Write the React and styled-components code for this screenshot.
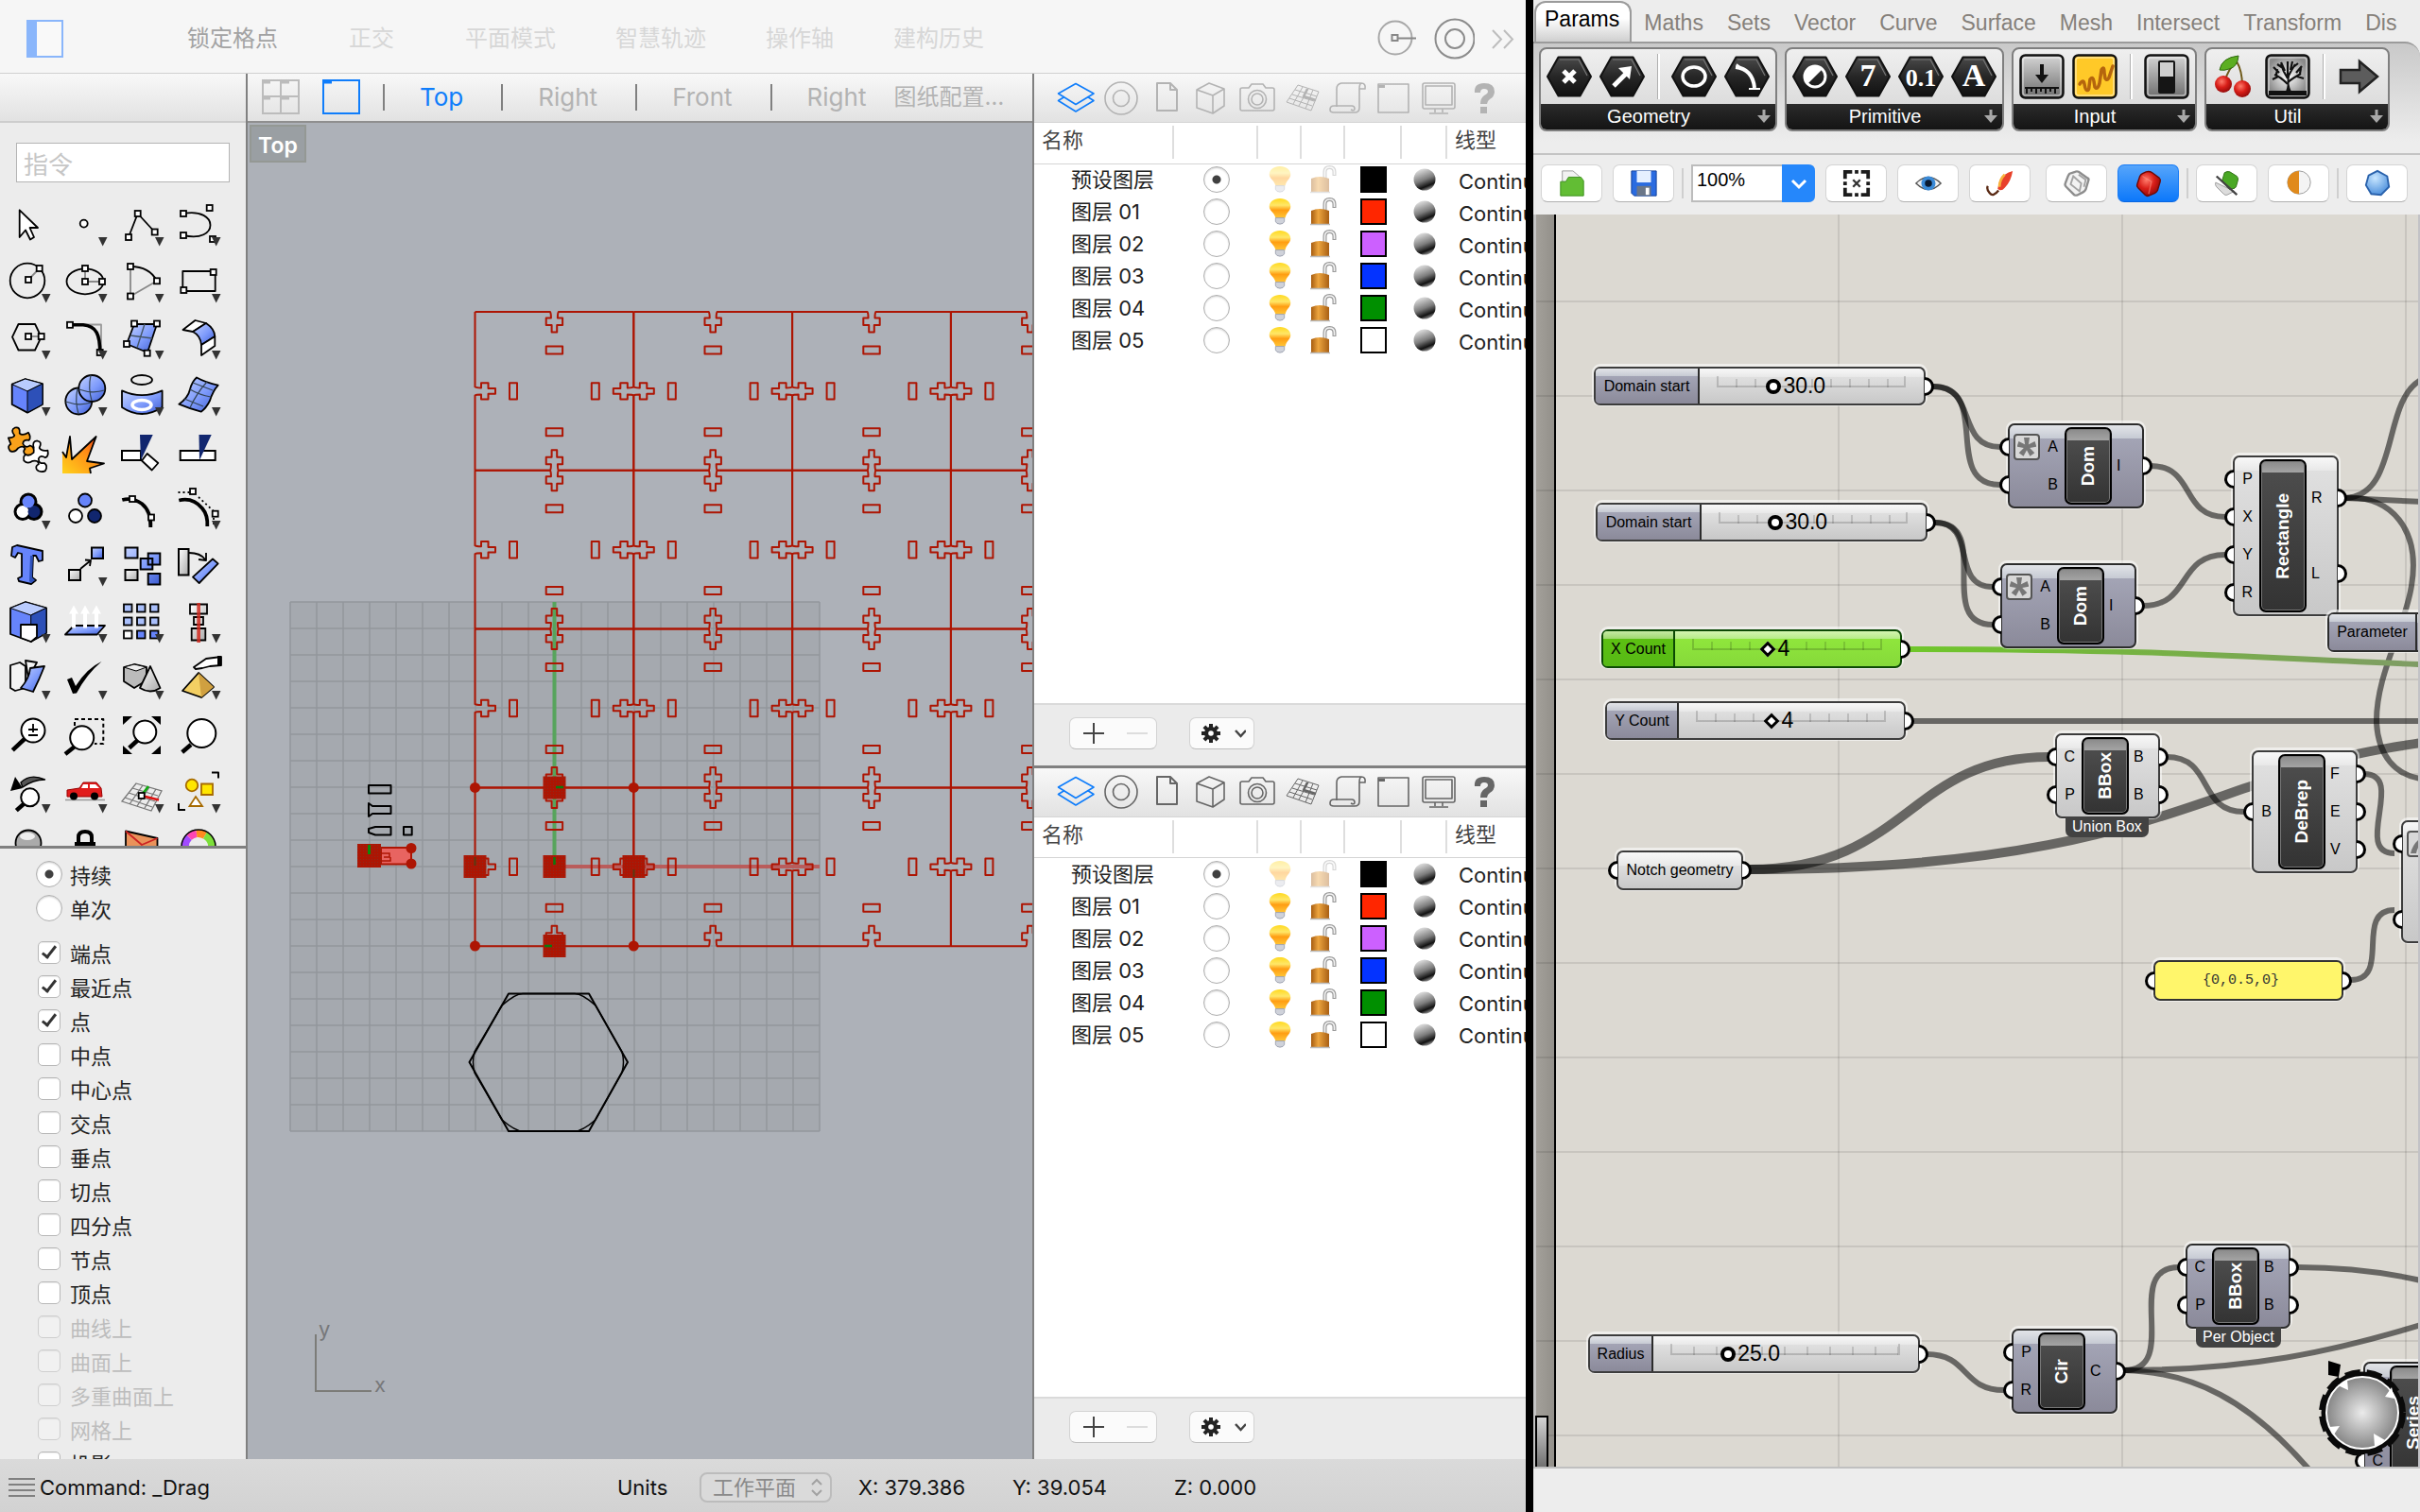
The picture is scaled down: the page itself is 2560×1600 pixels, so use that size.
import React from "react";
import styled, { createGlobalStyle, css } from "styled-components";

const ui = `Inter, "Noto Sans CJK SC", sans-serif`;
const gh = `"Liberation Sans", Arial, sans-serif`;

const GlobalStyle = createGlobalStyle`
  *, *::before, *::after { box-sizing: border-box; }
  html, body, #root { height: 100%; }
  body { margin: 0; overflow: hidden; background: #000; font-family: ${ui}; font-size: 22px; color: #222; }
  button, input, select { font: inherit; color: inherit; margin: 0; }
  button { background: none; border: 0; padding: 0; }
  svg { display: block; }
`;

/* ---------- shell ---------- */

const Desktop = styled.div`
  display: grid;
  grid-template-columns: minmax(0, 1614fr) 8px minmax(0, 938fr);
  height: 100vh;
`;

const Modeler = styled.section`
  display: grid;
  grid-template-rows: 78px minmax(0, 1fr) 56px;
  grid-column: 1;
  min-width: 0;
  background: #ececec;
`;

const TopBar = styled.header`
  display: flex;
  align-items: center;
  padding: 4px 12px 0 28px;
  background: #f6f6f6;
  border-bottom: 1px solid #d0d0d0;
`;

const ModeList = styled.nav`
  display: flex;
  gap: 63px;
  margin-left: 131px;
  flex: 1;
`;

const ModeButton = styled.button`
  min-width: 72px;
  font-size: 24px;
  line-height: 32px;
  white-space: nowrap;
  color: ${(p) => (p.$on ? "#a3a3a3" : "#d7d7d7")};
`;

const IconRow = styled.div`
  display: flex;
  align-items: center;
  gap: 18px;
`;

const Work = styled.div`
  display: grid;
  grid-template-columns: 262px minmax(0, 1fr) 522px;
  min-height: 0;
`;

const barFill = "linear-gradient(#f8f8f8, #e2e2e2)";

/* ---------- sidebar ---------- */

const Sidebar = styled.aside`
  display: flex;
  flex-direction: column;
  min-height: 0;
  border-right: 2px solid #808080;
  background: #ececec;
`;

const SidebarHead = styled.div`
  flex: none;
  height: 52px;
  background: ${barFill};
  border-bottom: 2px solid #cdcdcd;
`;

const CommandInput = styled.input`
  flex: none;
  height: 42px;
  margin: 21px 17px 15px;
  padding: 4px 7px 0;
  border: 1px solid #b4b4b4;
  background: #fff;
  font-size: 26px;
  &::placeholder { color: #c6c6c6; opacity: 1; }
`;

const Toolbox = styled.div`
  flex: 687 1 0;
  min-height: 0;
  overflow: hidden;
  display: grid;
  grid-template-columns: repeat(4, 60px);
  grid-auto-rows: 60px;
  border-bottom: 3px solid #808080;
`;

const ToolButton = styled.button`
  width: 60px;
  height: 60px;
`;

const Snaps = styled.form`
  flex: 637 1 0;
  min-height: 0;
  overflow: hidden;
  padding: 9px 0 0 38px;
`;

const SnapGroup = styled.div`
  & + & { margin-top: 11px; }
`;

const SnapRow = styled.label`
  display: flex;
  align-items: center;
  height: 36px;
  gap: 8px;
  font-size: 22px;
  color: ${(p) => (p.$off ? "#bdbdbd" : "#222")};
`;

const Radio = styled.input`
  appearance: none;
  flex: none;
  width: 28px;
  height: 28px;
  border-radius: 50%;
  border: 1px solid #b0b0b0;
  background: #fff;
  box-shadow: inset 0 1px 2px rgba(0, 0, 0, 0.2);
  &:checked { background: radial-gradient(circle, #404040 0 4px, #fff 5px); }
`;

const Check = styled.input`
  appearance: none;
  flex: none;
  display: grid;
  place-items: center;
  width: 24px;
  height: 24px;
  margin: 0 2px;
  border-radius: 5px;
  border: 1px solid #b8b8b8;
  background: #fff;
  box-shadow: inset 0 1px 1px rgba(0, 0, 0, 0.08);
  &:disabled { background: #f1f1f1; border-color: #cfcfcf; }
  &:checked::before {
    content: "";
    width: 8px;
    height: 16px;
    margin-bottom: 4px;
    border: solid #333;
    border-width: 0 3px 3px 0;
    transform: rotate(38deg);
  }
`;

/* ---------- viewport ---------- */

const ViewArea = styled.main`
  display: grid;
  grid-template-rows: 52px minmax(0, 1fr);
  min-width: 0;
`;

const ViewTabs = styled.nav`
  display: flex;
  align-items: center;
  gap: 24px;
  padding-left: 15px;
  background: ${barFill};
  border-bottom: 2px solid #8f8f8f;
  overflow: hidden;
`;

const ViewTabList = styled.div`
  display: flex;
  align-items: center;
`;

const ViewTab = styled.button`
  padding: 0 40px 0 37px;
  height: 28px;
  line-height: 28px;
  border-left: ${(p) => (p.$bare ? "0" : "2px solid #808080")};
  ${(p) => p.$bare && css`padding: 0 0 0 28px; margin-left: -39px;`}
  font-size: ${(p) => (p.$bare ? 24 : 26)}px;
  white-space: nowrap;
  color: ${(p) => (p.$on ? "#0f7dfb" : "#b3b3b3")};
`;

const Canvas3D = styled.div`
  position: relative;
  overflow: hidden;
  background: #adb1b8;
`;

const ViewLabel = styled.div`
  position: absolute;
  left: 2px;
  top: 2px;
  padding: 0 7px;
  height: 40px;
  line-height: 40px;
  border: 2px solid #949894;
  background: #9a9fa3;
  color: #fff;
  font-weight: 600;
  font-size: 23px;
`;

const Scene = styled.svg`
  width: 100%;
  height: 100%;
`;

/* ---------- layer panels ---------- */

const Panels = styled.aside`
  display: flex;
  flex-direction: column;
  min-width: 0;
  min-height: 0;
  border-left: 2px solid #808080;
`;

const Panel = styled.section`
  flex: 1 1 0;
  min-height: 0;
  display: flex;
  flex-direction: column;
  background: #fff;
  & + & { border-top: 3px solid #808080; }
`;

const PanelBar = styled.div`
  flex: none;
  height: 52px;
  display: flex;
  align-items: center;
  padding-left: 20px;
  background: ${barFill};
  border-bottom: 1px solid #d4d4d4;
`;

const PanelTab = styled.button`
  width: 48px;
  height: 48px;
  color: ${(p) => (p.$on ? "#0f7dfb" : p.$dim ? "#b3b3b3" : "#666")};
`;

const TableBox = styled.div`
  flex: 1;
  overflow: hidden;
`;

const LayerTable = styled.table`
  width: 100%;
  table-layout: fixed;
  border-collapse: collapse;
`;

const HeadCell = styled.th`
  width: ${(p) => (p.$w ? `${p.$w}px` : "auto")};
  height: 43px;
  padding: 0 0 6px 8px;
  text-align: left;
  font-weight: 400;
  font-size: 22px;
  line-height: 30px;
  color: #444;
  border-bottom: 1px solid #d4d4d4;
  background: ${(p) => (p.$w ? "linear-gradient(#dedede, #dedede) right 3px / 2px 35px no-repeat" : "none")};
`;

const Cell = styled.td`
  height: 34px;
  padding: ${(p) => p.$pad || "0"};
  white-space: nowrap;
  overflow: hidden;
  font-size: 22px;
  line-height: 30px;
  text-align: left;
`;

const Mid = styled.div`
  display: flex;
  justify-content: center;
  align-items: center;
  opacity: ${(p) => (p.$faded ? 0.4 : 1)};
`;

const Swatch = styled.button`
  display: block;
  width: 28px;
  height: 28px;
  border: 2px solid #000;
  background: ${(p) => p.$color};
`;

const PanelFoot = styled.div`
  flex: none;
  height: 66px;
  display: flex;
  align-items: center;
  gap: 34px;
  padding: 0 37px 4px;
  background: #ebebeb;
  border-top: 2px solid #dadada;
`;

const Pill = styled.div`
  display: flex;
  height: 34px;
  border: 1px solid #d3d3d3;
  border-bottom-color: #bdbdbd;
  border-radius: 7px;
  background: #fbfbfb;
`;

const PillButton = styled.button`
  display: grid;
  place-items: center;
  width: ${(p) => p.$w}px;
`;

/* ---------- status bar ---------- */

const StatusBar = styled.footer`
  display: flex;
  align-items: center;
  padding: 4px 0 0 9px;
  background: linear-gradient(#dadada, #d2d2d2);
  color: #111;
  font-size: 22px;
  white-space: nowrap;
`;

const StatusText = styled.span`
  width: ${(p) => p.$w}px;
  padding-left: ${(p) => p.$pad || 0}px;
`;

const SelectWrap = styled.span`
  display: grid;
  align-items: center;
  justify-items: end;
  & > * { grid-area: 1 / 1; }
  & > svg { pointer-events: none; }
`;

const PlaneSelect = styled.select`
  appearance: none;
  width: 140px;
  height: 32px;
  padding: 0 12px;
  border: 2px solid #bcbcbc;
  border-radius: 8px;
  background: #dadada;
  color: #8a8a8a;
  font-size: 22px;
  line-height: 26px;
`;

const Divider = styled.div`
  grid-column: 2;
  background: #000;
`;

/* ---------- node editor ---------- */

const Editor = styled.section`
  grid-column: 3;
  display: grid;
  grid-template-rows: 44px 118px 65px minmax(0, 1fr) 46px;
  min-width: 0;
  background: #ededed;
  font-family: ${gh};
`;

const EditorTabs = styled.nav`
  display: flex;
  align-items: flex-end;
  padding-left: 1px;
  overflow: hidden;
  white-space: nowrap;
`;

const EditorTab = styled.button`
  height: 43px;
  padding: 2px 12px 0 13px;
  font-size: 23px;
  line-height: 30px;
  color: #85807a;
  ${(p) => p.$on && css`
    padding: 0 11px 8px 9px;
    border: solid #9b9b9b;
    border-width: 2px 2px 0;
    border-radius: 12px 12px 0 0;
    background: linear-gradient(#ffffff 40%, #cfcfcf);
    color: #000;
  `}
`;

const Ribbon = styled.div`
  display: flex;
  align-items: flex-start;
  gap: 8px;
  padding: 4px 6px;
  border-top: 2px solid #9b9b9b;
  border-radius: 0 16px 0 0;
  background: linear-gradient(#c9c9c9, #ededed 90%);
  overflow: hidden;
`;

const RibbonGroup = styled.div`
  display: flex;
  flex-direction: column;
  height: 89px;
  border: 2px solid #7f7f7f;
  border-radius: 8px;
  overflow: hidden;
  background: linear-gradient(#efefef, #d4d4d4);
`;

const RibbonTools = styled.div`
  display: flex;
  align-items: center;
  gap: 8px;
  flex: 1;
  padding: 0 6px;
`;

const RibbonSep = styled.span`
  width: 12px;
  height: 48px;
  background: linear-gradient(90deg, transparent 5px, #b0b0b0 5px 6px, #fff 6px 8px, transparent 8px);
`;

const RibbonTool = styled.button`
  width: 48px;
  height: 48px;
`;

const RibbonCaption = styled.div`
  display: flex;
  align-items: center;
  justify-content: space-between;
  height: 27px;
  padding: 0 4px 2px 0;
  background: linear-gradient(#2b2b2b, #141414);
  color: #fff;
  font-size: 20px;
  line-height: 24px;
  & > span { flex: 1; text-align: center; }
`;

const FileBar = styled.div`
  display: flex;
  align-items: center;
  gap: 16px;
  padding: 0 0 4px 8px;
  border-top: 2px solid #c4c4c4;
  overflow: hidden;
`;

const FileGroup = styled.div`
  display: flex;
  align-items: center;
  gap: 11px;
`;

const BarSep = styled.span`
  width: 2px;
  height: 32px;
  margin: 0 -8px;
  background: #cfcfcf;
`;

const FileButton = styled.button`
  flex: none;
  display: grid;
  place-items: center;
  width: 65px;
  height: 40px;
  border: 1px solid ${(p) => (p.$on ? "#1a7cf6" : "#d4d4d4")};
  border-bottom-color: ${(p) => (p.$on ? "#0a66e0" : "#b0b0b0")};
  border-radius: 7px;
  background: ${(p) => (p.$on ? "linear-gradient(#56a5fb, #0c78fa)" : "#fff")};
`;

const ZoomSelect = styled.select`
  appearance: none;
  width: 131px;
  height: 40px;
  padding: 0 4px 8px;
  border: 2px solid #bcbcbc;
  border-radius: 0 7px 7px 0;
  background: #fff;
  color: #000;
  font-size: 20px;
`;

const Board = styled.div`
  position: relative;
  overflow: hidden;
  border-bottom: 2px solid #c0c0c0;
  border-right: 2px solid #c2c2c6;
  background:
    linear-gradient(90deg, #c4c4c4 0 3px, #a3a09a 3px, #93908a 22px, #000 22px 24px, transparent 24px) left / 24px 100% no-repeat,
    #dcd9d2;
`;

const BoardArt = styled.svg`
  position: absolute;
  left: 0;
  top: 0;
  pointer-events: none;
`;

/* The board's top-left corner on the drawing plane; nodes are stored in plane units. */
const OX = 1623;
const OY = 227;

const gray = css`
  background: linear-gradient(#f8f8f8, #e8e8e8 ${(p) => p.$gloss}px, #dfdfdf ${(p) => p.$gloss}px, #c8c8c8);
  border-color: #3c3c3c;
`;
const violet = css`
  background: linear-gradient(#e2e4e8, #c6cad3 ${(p) => p.$gloss}px, #a3a4b5 ${(p) => p.$gloss}px, #8b8a9a);
  border-color: #2c2c2c;
`;

const NodeBox = styled.div`
  position: absolute;
  left: ${(p) => p.$x - OX}px;
  top: ${(p) => p.$y - OY}px;
  width: ${(p) => p.$w}px;
  height: ${(p) => p.$h}px;
  display: flex;
  border: 2px solid;
  border-radius: 7px;
  box-shadow: 0 -1px 0 2px rgba(255, 255, 255, 0.55);
  color: #000;
  ${(p) => (p.$violet ? violet : gray)}
`;

const Ports = styled.div`
  width: ${(p) => (p.$w ? `${p.$w}px` : "auto")};
  flex: ${(p) => (p.$w ? "none" : 1)};
  display: flex;
  flex-direction: column;
  justify-content: center;
`;

const Port = styled.div`
  position: relative;
  display: flex;
  align-items: center;
  justify-content: ${(p) => (p.$out ? "flex-start" : "flex-end")};
  gap: 8px;
  height: 40px;
  padding: ${(p) => (p.$out ? "0 0 0 5px" : "0 7px 0 4px")};
  font-size: 16px;
`;

const Grip = styled.span`
  position: absolute;
  top: 50%;
  width: 10px;
  height: 20px;
  margin-top: -10px;
  border: 3px solid #000;
  background: #fff;
  ${(p) => (p.$out
    ? css`right: -11px; border-left: 0; border-radius: 0 10px 10px 0;`
    : css`left: -11px; border-right: 0; border-radius: 10px 0 0 10px;`)}
`;

const StarBox = styled.span`
  display: grid;
  place-items: center;
  width: 28px;
  height: 28px;
  margin-right: auto;
  border: 2px solid #555;
  border-radius: 4px;
  background: #d8d8d8;
`;

const Core = styled.div`
  flex: none;
  width: 50px;
  margin: 2px 0;
  display: grid;
  place-items: center;
  border: 2px solid #000;
  border-radius: 7px;
  background: linear-gradient(#8a8a8a, #a4a4a4 12px, #4c4c4c 12px, #333);
  box-shadow: inset 0 0 0 1px #777;
`;

const CoreText = styled.span`
  writing-mode: vertical-rl;
  transform: rotate(180deg);
  color: #fff;
  font-weight: 700;
  font-size: 19px;
  line-height: 24px;
`;

const Caption = styled.div`
  position: absolute;
  top: 100%;
  left: 9px;
  height: 22px;
  padding: 0 7px;
  border-radius: 0 0 7px 7px;
  background: #424242;
  color: #fff;
  font-size: 16px;
  line-height: 22px;
  white-space: nowrap;
`;

const NodeText = styled.div`
  flex: 1;
  display: grid;
  place-items: center;
  font-size: 16px;
  white-space: nowrap;
`;

const SliderBox = styled(NodeBox)`
  ${(p) => p.$green && css`
    border-color: #0c4a04;
    background: linear-gradient(#d4f5b0, #b6ec88 8px, #8fe63c 8px, #86d93a);
  `}
`;

const SliderName = styled.label`
  flex: none;
  display: grid;
  place-items: center;
  width: ${(p) => p.$w}px;
  border-right: 2px solid #333;
  border-radius: 4px 0 0 4px;
  font-size: 16px;
  white-space: nowrap;
  ${(p) => (p.$green
    ? css`background: linear-gradient(#c6eaa4, #9fd870 8px, #5cc012 8px, #57b916); border-color: #0c4a04;`
    : violet)}
`;

const Track = styled.div`
  position: relative;
  flex: 1;
  display: grid;
  margin: 0 12px 0 11px;
  & > * { grid-area: 1 / 1; }
`;

const Ticks = styled.span`
  height: 12px;
  margin: 8px 7px 0;
  border: solid rgba(0, 0, 0, 0.16);
  border-width: 0 2px 2px;
  background: repeating-linear-gradient(90deg, transparent 0 ${(p) => p.$step - 2}px, rgba(0, 0, 0, 0.14) ${(p) => p.$step - 2}px ${(p) => p.$step}px) 0 3px / 100% 100% no-repeat;
`;

const Range = styled.input`
  appearance: none;
  width: 100%;
  height: 37px;
  background: none;
  &::-webkit-slider-thumb {
    appearance: none;
    width: 16px;
    height: 16px;
    border: 4px solid #000;
    border-radius: 50%;
    background: #fff;
    ${(p) => p.$diamond && css`
      width: 12px;
      height: 12px;
      border-width: 3px;
      border-radius: 0;
      transform: rotate(45deg);
    `}
  }
`;

const Value = styled.output`
  position: absolute;
  top: 4px;
  margin-left: 10px;
  font-size: 23px;
  line-height: 28px;
`;

const Note = styled.div`
  position: absolute;
  left: ${(p) => p.$x - OX}px;
  top: ${(p) => p.$y - OY}px;
  display: grid;
  place-items: center;
  width: ${(p) => p.$w}px;
  height: ${(p) => p.$h}px;
  padding-right: 16px;
  border: 2px solid #333;
  border-radius: 7px;
  background: #fff66b;
  box-shadow: 0 -1px 0 2px rgba(255, 255, 255, 0.55);
  color: #333;
  font-family: "Liberation Mono", monospace;
  font-size: 15px;
`;

/* ---------- tool icons ---------- */

const P = ({ x, y }) => <rect x={x - 3} y={y - 3} width="6" height="6" fill="#fff" stroke="#000" strokeWidth="1.8" />;
const L = ({ d, w = 1.8, c = "#000", f = "none", ...r }) => <path d={d} fill={f} stroke={c} strokeWidth={w} strokeLinejoin="round" {...r} />;
const Lens = ({ x, y, r, d }) => (
  <>
    <L d={d} w="4.5" strokeLinecap="butt" />
    <circle cx={x} cy={y} r={r} fill="#fff" stroke="#000" strokeWidth="2" />
  </>
);
const B = "url(#blue)";
const piece = "M-10-8q5 1 6-1 -3-6 2-7 5 0 3 6 2 3 8 1 2 5-1 7-5-2-6 2 1 5 6 3 4 2 2 7-5 3-8 0-2-3 1-5-1-4-6-2-4 4-8 1-2-5 2-6z";

const tools = [
  ["选取", 0, <L d="M20.7 14.3V43l6.3-7.5 5 10 4-2.5-4.5-10H40z" f="#fff" />],
  ["点", 1, <circle cx="28.7" cy="28.6" r="4" fill="#fff" stroke="#000" strokeWidth="1.8" />],
  ["多重直线", 1, <><L d="M16 43 25.7 18l18 19.5" /><P x={16} y={43} /><P x={25.7} y={18} /><P x={43.7} y={37.5} /></>],
  ["控制点曲线", 1, <><L d="M14 18C52 11 52 50 14 41" /><P x={14} y={18} /><P x={14} y={41} /><P x={41.7} y={12} /><P x={45} y={45} /></>],
  ["圆", 1, <><circle cx="29" cy="29" r="18.3" fill="none" stroke="#000" strokeWidth="1.8" /><L d="M30 28 41.7 16" c="#888" /><P x={30} y={28} /><P x={41.7} y={16} /></>],
  ["椭圆", 1, <><ellipse cx="30" cy="29.8" rx="19.5" ry="13.5" fill="none" stroke="#000" strokeWidth="1.8" /><L d="M30 16v14h18" c="#888" /><P x={30} y={16} /><P x={30} y={30} /><P x={48} y={30} /></>],
  ["圆弧", 1, <><L d="M46 29.3 18 45.5V14" c="#888" /><L d="M18 14Q38 14 46 29.3" /><P x={18} y={14} /><P x={18} y={45.5} /><P x={46} y={29.3} /></>],
  ["矩形", 1, <><L d="M13.3 19h34.4v21H13.3z" /><P x={45.7} y={20} /><P x={14.3} y={39} /></>],
  ["多边形", 1, <><L d="M13 28.6 19.5 15h17.6L43.6 28.6 37 42.5H19.5z" /><L d="M30 28h13" c="#888" /><P x={30} y={28} /><P x={43.7} y={28} /></>],
  ["圆角", 1, <><L d="M14 15.5H47V46" c="#999" /><L d="M14 15.8h14C42 17 46 26 45.7 46" w="3.6" /><P x={14} y={15.8} /><P x={45.7} y={45} /></>],
  ["曲面", 1, <><L d="M22 15H46L36 45 14 36z" f={B} /><L d="M18 27 41 30M33 15 25 40" w="1.4" c="#456" /><P x={22} y={14.5} /><P x={46} y={14.5} /><P x={14} y={36} /><P x={35.7} y={45.7} /></>],
  ["放样", 1, <><L d="M26.5 11 38 14 24 23 13.5 21z" f="#fff" /><L d="M38 14Q47 20 47.3 28L33 37Q32 27 24 23z" f={B} /><L d="M33 37 47.3 28V38L33 48z" f="#fff" /></>],
  ["立方体", 1, <><L d="M12.7 18.7 26.7 13 45 18v22L29 48.6 12.7 40z" f="#6684fb" /><L d="M12.7 18.7 26.7 13 45 18 29 26z" f="#b9cbfd" w="1" /><L d="M29 26 45 18v22L29 48.6z" f="#2d50b8" w="1" /></>],
  ["布尔运算", 1, <><circle cx="23.3" cy="36.5" r="14" fill={B} stroke="#000" strokeWidth="1.8" /><L d="M9.500 37q14 5 27 1M22 23q-3 14 1 27" w="1.200" c="#345" /><circle cx="37.3" cy="23" r="14" fill={B} stroke="#000" strokeWidth="1.8" /><L d="M23.500 24q14 5 27 1M36 9q-3 14 1 27" w="1.200" c="#345" /></>],
  ["投影曲线", 1, <><ellipse cx="30" cy="14" rx="11" ry="5" fill="none" stroke="#000" strokeWidth="1.8" /><L d="M9 25.4Q30 35 51.6 25.4V43Q30 57 9 43z" f={B} /><ellipse cx="30" cy="40.5" rx="10" ry="5" fill="none" stroke="#fff" strokeWidth="3.5" /></>],
  ["网格", 1, <><L d="M28 11.5Q38 17 50.7 19.6 45 26 42 36 38 44 32.7 47.7 22 45 9.3 39.7 19 33 21 24 23 16 28 11.5z" f={B} /><L d="M39 16Q28 28 21 43.5M21 24q10 6 22 8M15 34l20 8M24 17l21 8" w="1.2" c="#345" /></>],
  ["组合", 0, <><g transform="translate(38.500 37) scale(1.150) rotate(10)"><L d={piece} f="#fff" w="1.500" /></g><g transform="translate(22 22) scale(1.150) rotate(-12)"><L d={piece} f="#f9a11b" w="1.500" /></g></>],
  ["炸开", 0, <><path d="M6 30 10 36 14 14 16 38 41.7 14 32 40l18 2.5-15 5 1 5.5H6z" fill="url(#flame)" /><L d="M6 30 10 36 14 14 16 38 41.7 14 32 40l18 2.5-15 5 1 5.5" /></>],
  ["修剪", 0, <><path d="M9 29h20v10H9z" fill="#fff" stroke="#000" strokeWidth="2" /><L d="M35.7 32 47.3 42 40.7 49.5 30 39.5z" f="#fff" /><path d="M28 12h13.7L29 39z" fill="#11266f" /></>],
  ["分割", 0, <><path d="M10.7 29h37v10h-37z" fill="#fff" stroke="#000" strokeWidth="2" /><path d="M30.5 12H43.7L31 39z" fill="#11266f" /></>],
  ["群组", 1, <><g stroke="#000" strokeWidth="6"><circle cx="30" cy="23" r="6.5" /><circle cx="24" cy="33.5" r="6.5" /><circle cx="36" cy="33.5" r="6.5" /></g><circle cx="24" cy="33.5" r="6.5" fill="#fff" /><circle cx="36" cy="33.5" r="6.5" fill="#11266f" /><circle cx="30" cy="23" r="6.5" fill="#6684fb" /></>],
  ["解散群组", 0, <g stroke="#000" strokeWidth="1.8"><circle cx="30" cy="21.5" r="7" fill="#6684fb" /><circle cx="20" cy="38" r="7" fill="#fff" /><circle cx="40" cy="38" r="7" fill="#11266f" /></g>],
  ["编辑点", 0, <><L d="M9.3 21Q20 18 30 25 40 33 39.3 50" w="3.8" /><P x={20} y={20} /><P x={40} y={39.5} /></>],
  ["控制点", 1, <><L d="M9.3 21.5Q24 18 34 30 40 37 39.3 49" w="3.8" /><L d="M8.5 13H22M30 18 46 33M46 40v8" strokeDasharray="2 3" /><P x={24} y={12} /><P x={47.7} y={35.7} /></>],
  ["文字", 0, <><L d="M12 20 13 11 18 9 45 15 45 25 41 26 38 20 35 20 34 43 38 46 33 50 20 47 19 44 23 42 23 18 19 17 16 22z" f="#6684fb" /><path d="M35 20 34 43l3 3-4 3-2-2 1-27z" fill="#2d50b8" /></>],
  ["移动", 1, <><path d="M13 35h12v11H13z" fill="url(#ash)" stroke="#000" strokeWidth="2" /><path d="M37 11.5h12V23H37z" fill={B} stroke="#000" strokeWidth="2" /><L d="M25 34 36 25M30 24.5l6 .5-1 6" /></>],
  ["复制", 0, <g stroke="#000" strokeWidth="2" fill={B}><path d="M12.5 11.5h13v11h-13zM36.7 17.5h12.6v12H36.700zM28.700 23h12.6v11.5H28.700zM36.700 39h12.6v11.5H36.700z" /><path d="M12.5 35h13v11h-13z" fill="url(#ash)" /></g>],
  ["旋转", 0, <><path d="M9 13h10.5v27.5H9z" fill="url(#ash)" stroke="#000" strokeWidth="2" /><L d="M45 23.5 50.7 28.4 30.7 49 24 42.700z" f={B} /><L d="M20 17q12 0 17 7M38 17v8l-8-1" /></>],
  ["实体", 1, <><L d="M11 15.5 27 9 49 15.3V42L32.7 51 11 43z" f="#6684fb" /><L d="M11 15.5 27 9 49 15.3 32.7 23z" f="#b9cbfd" w="1" /><L d="M32.7 23 49 15.3V42L32.7 51z" f="#2d50b8" w="1" /><L d="M22 33 39 33 39 46 33 51 22 47z" f="#fff" /></>],
  ["挤出", 1, <><L d="M18.3 34H51L42.7 43.5H9z" f={B} /><g fill="#fff"><path d="M18 12.6l5 9h-3v15h-4v-15h-3zM30 12.6l5 9h-3v15h-4v-15h-3zM42 12.6l5 9h-3v15h-4v-15h-3z" /></g></>],
  ["阵列", 1, <g stroke="#000" strokeWidth="1.8">{[0, 1, 2].map((r) => [0, 1, 2].map((c) => <rect key={`${r}${c}`} x={11 + c * 14} y={11.5 + r * 14} width="8.5" height="8" fill={r === 2 ? (c === 0 ? "#fff" : "#6684fb") : "#a9bffb"} />))}</g>],
  ["对齐", 1, <><g fill="url(#ash)" stroke="#000" strokeWidth="1.8"><path d="M21 11.5h18v10H21zM25 25h10v8H25zM22.7 37h14.6v12.5H22.7z" /></g><path d="M28.3 10h3.7v42h-3.700z" fill="#d22a20" fillOpacity=".85" /></>],
  ["变形", 1, <><L d="M11 16 21 13 27 17V40L16 43 11 40z" f="#f4f4f4" /><L d="M27 11 39 13 30 30z" f="#f4f4f4" /><L d="M32 19 47 17Q42 30 35 44L22 40Q31 30 32 19z" f={B} /></>],
  ["检查", 1, <path d="M11 31 16 29 20 38Q32 19 47.5 12 32 25 21 45.5L17 46z" />],
  ["渲染", 1, <><L d="M11 18 22 15 35 18V32L22 40 11 33z" f="#bbb" /><L d="M11 18 22 15 35 18 24 22z" f="#eee" w="1" /><L d="M39 17 49.5 40Q39 47 28 40z" f="url(#ash)" /></>],
  ["材质", 1, <><L d="M30 24 46 39 33 50 13 43z" f="#f3cf63" /><path d="M30 24 46 39 33 50z" fill="#d0a040" /><L d="M25 18 38 9 54 7V16L42 17 34 19 27 20z" f="#fff" /><path d="M50 6h4v11h-4z" /></>],
  ["缩放", 0, <><Lens x={35} y={25} r={12.5} d="M27 33 13.3 45.8" /><L d="M30 24h10M35 18v9M30 30h10" /></>],
  ["框选缩放", 0, <><L d="M19 20V13h30.3V39H40" strokeDasharray="4 3" w="2" /><Lens x={26.7} y={32.8} r={12.5} d="M19 42 9 50" /></>],
  ["缩放至范围", 0, <><path d="M10 10h10L10 19zM50 10H40l10 9zM10 50V41l10 9zM50 50V41L40 50z" /><Lens x={33.3} y={26.5} r={12} d="M26 35 16.7 43.5" /></>],
  ["缩放至选取", 0, <Lens x={33.3} y={28} r={15} d="M22 40 12.7 48" />],
  ["复原视图", 1, <><Lens x={31.7} y={35.8} r={9.5} d="M26 42 17.3 49.6" /><L d="M22 20Q32 10 47.5 17 35 17 24 25z" f="#555" w="1.4" /><path d="M11 29 16 14l8 12z" /></>],
  ["四视图", 1, <><path d="M9 38.5h42" stroke="#999" strokeWidth="1.5" /><path d="M11 28 24 26 28 20H42L47 26 48 35H11z" fill="#e11b1b" stroke="#900" /><path d="M28 22h5v4h-7zM35 22h6l4 4H35z" fill="#fff" /><circle cx="18" cy="34.5" r="4" /><circle cx="40" cy="34.5" r="4" /></>],
  ["工作平面", 1, <><g stroke="#777" fill="none" strokeWidth="1.3"><path d="M24 21 51 29 40 50 9 40zM20 26l27 8M16 31l28 9M12 36l29 10M31 23 17 43M38 25 25 45M45 27 33 47" /></g><L d="M30 34 48 38.5" c="#d11" w="2.6" /><L d="M31 32 37 24" c="#1a1" w="2.6" /><P x={29.7} y={34} /></>],
  ["图块", 1, <><g fill="#ffe600" stroke="#a66a00" strokeWidth="1.8"><circle cx="23" cy="23" r="6.3" /><path d="M33 21.5h12v11.5H33z" /><path d="M27 35 34 45H20.500z" fill="#fff" /></g><L d="M44 9.5h7v6M9 42v7h7" w="2" /></>],
  ["着色", 0, <><circle cx="30" cy="24" r="13.5" fill="#aaa" stroke="#000" strokeWidth="1.8" /><ellipse cx="29" cy="17" rx="8" ry="4" fill="#fff" opacity=".8" /></>],
  ["锁定", 0, <><L d="M23 24V18q0-6 7-6t7 6v6" w="4" /><path d="M19 23h22v20H19z" /></>],
  ["打印", 0, <><L d="M13 11.5 46.5 19V40L13 40z" f="#e9925a" /><L d="M13 11.5 30 26 46.5 19" c="#c22" /></>],
  ["颜色", 0, <g fill="none" strokeWidth="8"><path d="M16 30a14 14 0 0 1 4-12" stroke="#a24bff" /><path d="M20 18a14 14 0 0 1 8-4" stroke="#ff45b4" /><path d="M28 14a14 14 0 0 1 9 2" stroke="#ff8a1f" /><path d="M37 16a14 14 0 0 1 7 14" stroke="#7ddf3a" /><circle cx="30" cy="28" r="18" stroke="#000" strokeWidth="1.5" /></g>],
];

const HiddenArt = styled.svg`
  position: absolute;
  width: 0;
  height: 0;
`;

const SharedDefs = () => (
  <HiddenArt aria-hidden="true">
    <defs>
      <linearGradient id="blue" x1="0" y1="0" x2="1" y2="1"><stop offset="0" stopColor="#c3d2ff" /><stop offset=".55" stopColor="#7d9afb" /><stop offset="1" stopColor="#3c5bd0" /></linearGradient>
      <linearGradient id="ash" x1="0" y1="0" x2="1" y2="1"><stop offset="0" stopColor="#fff" /><stop offset="1" stopColor="#aaa" /></linearGradient>
      <linearGradient id="flame" x1="0" y1="1" x2="1" y2="0"><stop offset="0" stopColor="#ffd21c" /><stop offset=".6" stopColor="#ff8a16" /><stop offset="1" stopColor="#ef2b12" /></linearGradient>
      <linearGradient id="bulb" x1="0" y1="0" x2="0" y2="1"><stop offset="0" stopColor="#ffd91f" /><stop offset=".35" stopColor="#ffe768" /><stop offset=".6" stopColor="#ff9d12" /><stop offset="1" stopColor="#ffc535" /></linearGradient>
      <linearGradient id="brass" x1="0" y1="0" x2="1" y2="0"><stop offset="0" stopColor="#a65c10" /><stop offset=".4" stopColor="#eda53f" /><stop offset="1" stopColor="#a85f14" /></linearGradient>
      <linearGradient id="chrome" x1=".3" y1="0" x2=".7" y2="1"><stop offset="0" stopColor="#e4e4e4" /><stop offset=".5" stopColor="#7c7c7c" /><stop offset=".8" stopColor="#111" /><stop offset="1" stopColor="#aaa" /></linearGradient>
      <linearGradient id="hex" x1="0" y1="0" x2="0" y2="1"><stop offset="0" stopColor="#4a4a4a" /><stop offset=".5" stopColor="#262626" /><stop offset="1" stopColor="#111" /></linearGradient>
      <linearGradient id="steel" x1="0" y1="0" x2="0" y2="1"><stop offset="0" stopColor="#d5d5d5" /><stop offset="1" stopColor="#6d6d6d" /></linearGradient>
      <radialGradient id="mist"><stop offset="0" stopColor="#fff" /><stop offset="1" stopColor="#8a8a8a" /></radialGradient>
      <radialGradient id="ruby" cx=".4" cy=".35" r=".7"><stop offset="0" stopColor="#ff7a6a" /><stop offset=".5" stopColor="#d81e18" /><stop offset="1" stopColor="#8c0808" /></radialGradient>
      <radialGradient id="sky" cx=".4" cy=".3" r=".8"><stop offset="0" stopColor="#c8e6ff" /><stop offset="1" stopColor="#3f86d8" /></radialGradient>
      <radialGradient id="dial"><stop offset="0" stopColor="#ebebeb" /><stop offset="1" stopColor="#868686" /></radialGradient>
      <pattern id="mesh" width="3" height="3" patternUnits="userSpaceOnUse"><rect width="3" height="3" fill="#ad1503" /><rect width="1" height="1" fill="#8d2a1c" /></pattern>
    </defs>
  </HiddenArt>
);

/* ---------- viewport drawing ---------- */

const TILE = 167.8;
const H = TILE / 2;
const edge = `M${-H} ${-H}H-4.5Q-3.5 ${-H + 1} -3.5 ${-H + 6.5}H-8.7V${-H + 14}H-2.8V${-H + 21.5}H2.8V${-H + 14}H8.7V${-H + 6.5}H3.5Q3.5 ${-H + 1} 4.5 ${-H}H${H}M-8.7 ${-H + 36.5}H8.7V${-H + 44.5}H-8.7Z`;

const ViewScene = () => {
  const lines = Array.from({ length: 21 }, (_, i) => i * 28);
  return (
    <Scene viewBox="262 130 830 1414" preserveAspectRatio="xMidYMid slice" role="img" aria-label="Top">
      <rect x="307" y="637" width="560" height="560" fill="#a5a9af" />
      <g stroke="#92979c" strokeWidth="1.5">
        {lines.map((n) => <path key={n} d={`M${307 + n} 637v560M307 ${637 + n}h560`} />)}
      </g>
      <path d="M586.5 637V917" stroke="#57a45c" strokeWidth="4" />
      <path d="M587 917H867" stroke="#c0524f" strokeWidth="4" opacity=".85" />
      <g fill="none" stroke="#ad1503" strokeWidth="2" strokeLinejoin="round">
        {[0, 1, 2, 3].map((c) => [0, 1, 2, 3].map((r) => (
          <g key={`${c}-${r}`} transform={`translate(${502.5 + H + c * TILE} ${330 + H + r * TILE})`}>
            {[0, 90, 180, 270].map((a) => <path key={a} d={edge} transform={`rotate(${a})`} />)}
          </g>
        )))}
      </g>
      <g fill="#ad1503">
        {[[502.5, 833.4], [670.3, 833.4], [502.5, 1001], [670.3, 1001]].map(([x, y]) => <circle key={`${x}${y}`} cx={x} cy={y} r="5.5" />)}
      </g>
      <g fill="url(#mesh)">
        {[[586.5, 833.5], [502.5, 917], [586.5, 917], [670.5, 917], [586.5, 1001]].map(([x, y]) => <rect key={`${x}${y}`} x={x - 12} y={y - 12} width="24" height="24" />)}
      </g>
      <path d="M586.5 907v8M576 1001h8M588 833h8" stroke="#0c7a0c" strokeWidth="2.5" />
      <path d="M502.5 907v9M670.5 920v8" stroke="#5a3a12" strokeWidth="2" />
      <g fill="none" stroke="#000" strokeWidth="2" strokeLinejoin="round">
        <path d="M390 831h23.5v8.5H390zM390 850l4 3h19.5v8H394l-4 3zM397 875h16.5v8.5H397l-7-2.5v-4zM427 875h8.7v8.5H427z" />
        <path d="M538 1051.5h85l41 72.5-41 73h-85l-41.5-73z" />
        <path d="M553 1051.500h55Q616 1051.500 630 1064L658 1113Q661 1124 658 1135L630 1185Q616 1197 608 1197H553Q545 1197 531 1185L502 1135Q499 1124 502 1113L531 1064Q545 1051.500 553 1051.500z" strokeWidth="1.5" />
      </g>
      <rect x="403" y="897" width="32" height="17.5" fill="#e86461" stroke="#ad1503" strokeWidth="2" />
      <path d="M403 903h9v4h-6M403 911h10v-4" fill="none" stroke="#ad1503" strokeWidth="1.5" />
      <rect x="378" y="893" width="25" height="25" fill="url(#mesh)" />
      <path d="M390.5 894v10" stroke="#0c8a0c" strokeWidth="3" />
      <circle cx="435" cy="897.5" r="5.5" fill="#ad1503" /><circle cx="435" cy="914" r="5.5" fill="#ad1503" />
      <path d="M334 1412v60h59" fill="none" stroke="#7c7c78" strokeWidth="2" />
      <text x="337" y="1414" fontFamily={ui} fontSize="22" fill="#77787a">y</text>
      <text x="396" y="1473" fontFamily={ui} fontSize="22" fill="#77787a">x</text>
    </Scene>
  );
};

/* ---------- layer panel pieces ---------- */

const S = ({ children, ...r }) => (
  <svg width="48" height="48" viewBox="0 0 48 48" fill="none" stroke="currentColor" strokeWidth="1.6" strokeLinejoin="round" aria-hidden="true" {...r}>{children}</svg>
);

const panelIcons = [
  ["图层", <S><path d="M24 8.5 43 19 24 30.5 5.5 19z" /><path d="M12 22.5 5.5 26.5 24 38 43 26.5 36.5 22.5" /></S>],
  ["属性", <S><circle cx="24" cy="24" r="17" /><circle cx="24" cy="24" r="8.5" /></S>],
  ["文件", <S><path d="M14 8h14l7 7v22H14zM28 8v7h7" strokeWidth="2" /></S>],
  ["图块", <S><path d="M8 15 21 8l16 6v18l-12 8L8 34zM8 15l17 6 12-7M25 21v19" /></S>],
  ["视图", <S><path d="M6 15q0-2 2-2h7l3-4h12l3 4h7q2 0 2 2v20q0 2-2 2H8q-2 0-2-2z" /><circle cx="24" cy="25" r="9.5" /><circle cx="24" cy="25" r="6" /></S>],
  ["工作平面", <S strokeWidth="1"><path d="M19 10 41 17 33 37 7 28zM16 15l23 7M13 20l23 7M10 24l24 8M24 12 14 30M30 14 20 32M35 15 27 35" /><path d="M29 14l-4 8 13 4" strokeWidth="2.5" /></S>],
  ["备注", <S><path d="M12 33V14q0-5 5-6h21q5 0 4 6h-6q0-5 2-6M36 14v20q0 5-5 5H9q-4 0-4-3 0-4 4-4h19q3 0 3 3t-4 1" /></S>],
  ["图框", <S><path d="M8 9h32v30H8z" /><path d="M8 11.5h7" strokeWidth="3" /></S>],
  ["显示", <S><rect x="7" y="8" width="34" height="27" rx="2" /><path d="M10 11h28v20H10zM20 35v4M28 35v4M14 40h20" /></S>],
  ["说明", <svg width="48" height="48" viewBox="0 0 48 48" aria-hidden="true"><path d="M14 18Q13 8 24 8t11 9q0 5-5 8-3 2-3 5h-7q0-6 4-9 4-2 4-4 0-3-4-3t-4 4zM20 33h7v7h-7z" fill="currentColor" /></svg>],
];

const Bulb = () => (
  <svg width="26" height="30" viewBox="0 0 26 32" aria-hidden="true">
    <path d="M13 1C20 1 25 5 25 10c0 5-5 7-6 13H8C7 17 1 15 1 10 1 5 6 1 13 1z" fill="url(#bulb)" />
    <path d="M8 23h10v4q-1 3-5 3t-5-3z" fill="#cfd2da" stroke="#8d93a3" strokeWidth=".8" />
  </svg>
);

const Lock = () => (
  <svg width="28" height="30" viewBox="0 0 28 30" aria-hidden="true">
    <path d="M15.5 14V7q0-5 5-5t5 5v4" fill="none" stroke="#9a9a9a" strokeWidth="4" />
    <path d="M15.5 14V7q0-5 5-5t5 5v3" fill="none" stroke="#f4f4f4" strokeWidth="1.6" />
    <path d="M1 14q9-4 19 0v14H1z" fill="url(#brass)" />
    <path d="M0 28.5h21" stroke="#bbb" strokeWidth="1.5" />
  </svg>
);

const layers = [
  ["预设图层", "#000000"],
  ["图层 01", "#ff2600"],
  ["图层 02", "#cc60ff"],
  ["图层 03", "#0433ff"],
  ["图层 04", "#008f00"],
  ["图层 05", "#ffffff"],
];

const LayerPanel = ({ id, dim }) => (
  <Panel>
    <PanelBar>
      {panelIcons.map(([name, icon], i) => (
        <PanelTab key={name} type="button" aria-label={name} $on={i === 0} $dim={dim}>{icon}</PanelTab>
      ))}
    </PanelBar>
    <TableBox>
      <LayerTable>
        <thead>
          <tr>
            <HeadCell $w={148}>名称</HeadCell>
            {[89, 46, 46, 60, 48].map((w, i) => <HeadCell key={i} $w={w} />)}
            <HeadCell>线型</HeadCell>
          </tr>
        </thead>
        <tbody>
          {layers.map(([name, color], i) => (
            <tr key={name}>
              <Cell $pad="0 0 0 39px">{name}</Cell>
              <Cell><Mid><Radio type="radio" name={`current-${id}`} aria-label={name} defaultChecked={i === 0} /></Mid></Cell>
              <Cell><Mid $faded={i === 0}><Bulb /></Mid></Cell>
              <Cell><Mid $faded={i === 0}><Lock /></Mid></Cell>
              <Cell><Mid><Swatch type="button" aria-label={`${name} 颜色`} $color={color} /></Mid></Cell>
              <Cell><Mid><svg width="24" height="24" aria-hidden="true"><circle cx="12" cy="12" r="11.5" fill="url(#chrome)" /></svg></Mid></Cell>
              <Cell $pad="3px 0 0 12px">Continuous</Cell>
            </tr>
          ))}
        </tbody>
      </LayerTable>
    </TableBox>
    <PanelFoot>
      <Pill>
        <PillButton type="button" aria-label="新建图层" $w={50}><svg width="22" height="22"><path d="M11 0v22M0 11h22" stroke="#444" strokeWidth="2" /></svg></PillButton>
        <PillButton type="button" aria-label="删除图层" $w={41}><svg width="22" height="22"><path d="M0 11h22" stroke="#ddd" strokeWidth="2" /></svg></PillButton>
      </Pill>
      <Pill>
        <PillButton type="button" aria-label="图层选项" $w={67}>
          <svg width="50" height="22" aria-hidden="true">
            <g transform="translate(13 11)" fill="#222">
              {[0, 45, 90, 135].map((a) => <rect key={a} x="-2" y="-10" width="4" height="20" transform={`rotate(${a})`} />)}
              <circle r="7" /><circle r="2.8" fill="#fff" />
            </g>
            <path d="M39 8l5.500 6L50 8" fill="none" stroke="#444" strokeWidth="2.500" />
          </svg>
        </PillButton>
      </Pill>
    </PanelFoot>
  </Panel>
);

/* ---------- ribbon icons ---------- */

const Hex = ({ children }) => (
  <svg width="48" height="48" viewBox="0 0 48 48" aria-hidden="true">
    <path d="M12.5 3.5h23L47 24 35.5 44.5h-23L1 24z" fill="url(#hex)" stroke="#111" strokeWidth="2" strokeLinejoin="round" />
    <path d="M14 6h20l9 17" fill="none" stroke="#777" strokeWidth="1.2" />
    {children}
  </svg>
);
const HexText = ({ size, children }) => (
  <text x="24" y="34" textAnchor="middle" fontFamily='"Liberation Serif", serif' fontWeight="700" fontSize={size} fill="#fff">{children}</text>
);
const Plate = ({ fill = "url(#steel)", children }) => (
  <svg width="48" height="48" viewBox="0 0 48 48" aria-hidden="true">
    <rect x="1.5" y="1.5" width="45" height="45" rx="5" fill={fill} stroke="#111" strokeWidth="2.5" />
    <rect x="4" y="4" width="40" height="40" rx="3" fill="none" stroke="#fff" strokeOpacity=".5" strokeWidth="1.5" />
    {children}
  </svg>
);

const ribbon = [
  ["Geometry", [
    ["Point", <Hex><path d="M18 18l12 12M30 18 18 30" stroke="#fff" strokeWidth="5" /></Hex>],
    ["Vector", <Hex><path d="M15 34 28 21" stroke="#fff" strokeWidth="5" /><path d="M20 15l14-2-2 14z" fill="#fff" /></Hex>],
    null,
    ["Circle", <Hex><ellipse cx="24" cy="24" rx="12" ry="10" fill="none" stroke="#fff" strokeWidth="3.5" /></Hex>],
    ["Curve", <Hex><path d="M12 14q18 2 20 22" fill="none" stroke="#fff" strokeWidth="4" /><path d="M13 11l7 6M26 37h12" stroke="#fff" strokeWidth="2" /></Hex>],
  ]],
  ["Primitive", [
    ["Boolean", <Hex><circle cx="24" cy="24" r="11" fill="none" stroke="#fff" strokeWidth="3" /><path d="M32 16A11 11 0 1 0 16 32z" fill="#fff" /></Hex>],
    ["Integer", <Hex><HexText size={34}>7</HexText></Hex>],
    ["Number", <Hex><HexText size={26}>0.1</HexText></Hex>],
    ["Text", <Hex><HexText size={34}>A</HexText></Hex>],
  ]],
  ["Input", [
    ["Slider", <Plate><path d="M24 11v16" stroke="#111" strokeWidth="4" /><path d="M17 22h14l-7 9z" fill="#111" /><path d="M6 36h36M8 36v6M13 36v4M18 36v6M23 36v4M28 36v6M33 36v4M38 36v6" stroke="#111" strokeWidth="2" /></Plate>],
    ["Graph", <Plate fill="#ffc928"><path d="M8 32q4-6 5 0t2 6q3 2 3-4l1-7q3-4 4 2l1 6q3 4 5-4l2-14q3-5 3 3l1 6q3 4 5-4l3-9" fill="none" stroke="#b5650d" strokeWidth="3.500" strokeLinecap="round" /></Plate>],
    null,
    ["Toggle", <Plate><rect x="15" y="7" width="18" height="35" rx="2" fill="#151515" /><rect x="17" y="9" width="14" height="15" fill="#cfcfcf" /></Plate>],
  ]],
  ["Util", [
    ["Cherry", <svg width="48" height="48" viewBox="0 0 48 48" aria-hidden="true"><path d="M13 30Q18 14 26 8 32 18 32 34" fill="none" stroke="#6f5a1a" strokeWidth="2" /><path d="M8 17Q10 4 28 2 27 14 18 16 13 18 8 17z" fill="#5cae22" stroke="#2f6a10" /><circle cx="12" cy="32" r="9" fill="url(#ruby)" /><circle cx="32" cy="37" r="9" fill="url(#ruby)" /></svg>],
    ["Tree", <Plate fill="url(#mist)"><path d="M22 40q3-8 1-17h3q-2 9 2 17z" fill="#111" /><path d="M24 32q-8-8-14-10M24 30q8-6 14-9M24 26q-5-8-7-15M24 25q4-8 8-14M24 24V8M14 24l-6 3M34 24l7 2M15 20l-6-6M33 20l6-7M19 15l-6-4M30 14l5-4M21 18l-4-9M27 17l2-9M12 22l1-6M37 21l1-6" stroke="#111" strokeWidth="2.2" fill="none" /><path d="M4 39h40v5H4z" fill="#111" /></Plate>],
    null,
    ["Relay", <svg width="48" height="48" viewBox="0 0 48 48" aria-hidden="true"><path d="M4 17h20V8l19 16-19 16v-9H4z" fill="#5c5c5c" stroke="#222" strokeWidth="2.5" /></svg>],
  ]],
];

const F = ({ children }) => <svg width="30" height="30" viewBox="0 0 32 32" aria-hidden="true">{children}</svg>;

const fileIcons = {
  Open: <F><path d="M5 14V2h12l7 6v8z" fill="#f2f2f2" stroke="#999" /><path d="M3 14h6l3-5h14l3 4v17H3z" fill="#62bd34" stroke="#3b8f1c" /></F>,
  Save: <F><path d="M2 2h28v28H5l-3-3z" fill="#2a6be0" stroke="#123f98" /><path d="M8 2h16v13H8z" fill="#e6f0ff" /><path d="M8 19h16v11H8z" fill="#6a7688" /><path d="M18 21h4v8h-4z" fill="#fff" /></F>,
  Extents: <F><path d="M3 11V3h8M21 3h8v8M29 21v8h-8M11 29H3v-8M14 3h4M14 29h4M3 14v4M29 14v4" fill="none" stroke="#1c1c1c" strokeWidth="4" /><path d="M12 12l8 8M20 12l-8 8" stroke="#333" strokeWidth="2.5" /></F>,
  View: <F><path d="M2 16Q16 2 30 16 16 30 2 16z" fill="#f2f2f2" stroke="#555" strokeWidth="1.5" /><circle cx="16" cy="16" r="8" fill="#3b8bd8" /><circle cx="16" cy="16" r="4" fill="#0a1a30" /></F>,
  Sketch: <F><path d="M30 2Q20 4 15 14l-2 8q4 4 8-1Q28 14 30 2z" fill="#e8402a" /><path d="M21 6q-6 6-6 14" stroke="#f8b13c" strokeWidth="3" fill="none" /><path d="M14 24Q8 32 4 27t-2-8" fill="none" stroke="#5a2a14" strokeWidth="2.5" /></F>,
  Wire: <F><path d="M14 3q2-1 4 0l10 7q2 1 1 3l-3 10q-1 2-3 3l-6 3q-2 1-4 0L4 20q-2-2-1-4l3-8q1-2 2-3z" fill="#f3f3f3" stroke="#8d8d8d" strokeWidth="2.500" /><path d="M12 8l9 8-2 9-10-8zM18 6l8 6-2 8" fill="none" stroke="#a3a3a3" strokeWidth="2" /></F>,
  Shade: <F><path d="M13 3q4-1 7 1l8 6q2 2 1 4l-3 10q-1 2-3 3l-7 3q-2 1-4-1l-8-8q-2-2-1-4l3-9q1-2 3-3z" fill="url(#ruby)" stroke="#6d0a06" strokeWidth="1.500" /><path d="M9 8l10 6-3 14" fill="none" stroke="#ff9a8a" strokeOpacity=".5" strokeWidth="1.500" /></F>,
  Selected: <F><path d="M3 15q-1 3 1 5l8 8q2 2 4 1l8-4z" fill="#dcdcdc" stroke="#999" /><path d="M13 4q3-2 6-1l8 5q2 2 1 5l-2 7q-1 2-4 2l-3 1-9-9z" fill="#4aa825" stroke="#2c6e10" /><path d="M4 8 27 29" stroke="#444" strokeWidth="2.500" /></F>,
  Palette: <F><circle cx="16" cy="15" r="13" fill="#f4f4f4" stroke="#999" /><path d="M16 2a13 13 0 0 0 0 26z" fill="#e08a1c" /></F>,
  Quality: <F><path d="M16 2 27 8 29 20 20 29 9 28 3 18 6 7z" fill="url(#sky)" stroke="#2a62ac" strokeWidth="2" /></F>,
};

const FileTool = ({ name, on }) => <FileButton type="button" aria-label={name} $on={on}>{fileIcons[name]}</FileButton>;

/* ---------- nodes ---------- */

const NumberSlider = ({ id, x, y, w, nameW, name, at, text, step, diamond, green }) => (
  <SliderBox $x={x} $y={y} $w={w} $h={41} $gloss={9} $green={green}>
    <SliderName htmlFor={id} $w={nameW} $gloss={8} $green={green}>{name}</SliderName>
    <Track>
      <Ticks $step={step} />
      <Range id={id} type="range" min="0" max="100" defaultValue={at} $diamond={diamond} />
      <Value htmlFor={id} style={{ left: `calc(8px + (100% - 16px) * ${at / 100})` }}>{text}</Value>
    </Track>
    <Grip $out />
  </SliderBox>
);

const Component = ({ x, y, w, h, left, ins, outs, title, caption, purple, star }) => (
  <NodeBox $x={x} $y={y} $w={w} $h={h} $gloss={14} $violet={purple}>
    <Ports $w={left}>
      {ins.map((p, i) => (
        <Port key={i}>
          <Grip />
          {star && i === 0 && (
            <StarBox>
              <svg width="20" height="20" viewBox="-10 -10 20 20" aria-hidden="true">
                {[0, 72, 144, 216, 288].map((a) => <path key={a} d="M-1.5 0-3-10h6L1.5 0z" fill="#777" transform={`rotate(${a})`} />)}
              </svg>
            </StarBox>
          )}
          {p}
        </Port>
      ))}
    </Ports>
    <Core><CoreText>{title}</CoreText></Core>
    <Ports>{outs.map((p, i) => <Port key={i} $out>{p}{p !== "" && <Grip $out />}</Port>)}</Ports>
    {caption && <Caption>{caption}</Caption>}
  </NodeBox>
);

const wire = (x1, y1, x2, y2) => {
  const d = Math.hypot(x2 - x1, y2 - y1) / 2;
  return `M${x1} ${y1}C${x1 + d} ${y1} ${x2 - d} ${y2} ${x2} ${y2}`;
};

const wires = [
  wire(2046, 409, 2117, 473), wire(2046, 409, 2117, 513),
  wire(2048, 553, 2109, 621), wire(2048, 553, 2109, 661),
  wire(2276, 493, 2355, 547), wire(2268, 641, 2355, 587),
  "M2482 527C2540 524 2520 425 2562 402", "M2482 527L2562 531",
  "M2482 527C2530 524 2562 560 2552 620C2545 665 2514 715 2515 765C2517 800 2535 820 2562 824",
  "M2024 763H2562",
  wire(2293, 801, 2375, 859), wire(2502, 819, 2534, 903), wire(2488, 1037, 2534, 963),
  wire(2039, 1433, 2121, 1471), wire(2248, 1450, 2306, 1341),
  "M2248 1450C2380 1450 2470 1430 2562 1402", "M2248 1450C2320 1452 2380 1480 2448 1560",
  "M2432 1341Q2500 1341 2562 1355",
];

const Graph = () => (
  <Board>
    <BoardArt width="936" height="1326" viewBox={`${OX} ${OY} 936 1326`} aria-hidden="true">
      <defs><linearGradient id="live" x1="2020" x2="2560" y1="0" y2="0" gradientUnits="userSpaceOnUse"><stop offset="0" stopColor="#6fc72a" /><stop offset=".3" stopColor="#74b83a" /><stop offset="1" stopColor="#7f9c65" /></linearGradient></defs>
      <g stroke="rgba(0,0,0,.09)" strokeWidth="2">
        {Array.from({ length: 13 }, (_, i) => <path key={i} d={`M1626 ${319 + i * 100}H2560`} />)}
        <path d="M1946 227V1554M2246 227V1554M2546 227V1554" />
      </g>
      <g fill="none" stroke="rgba(0,0,0,.53)" strokeWidth="6">{wires.map((d) => <path key={d} d={d} />)}</g>
      <path d="M1852 920C2020 920 2020 801 2168 801" fill="none" stroke="rgba(0,0,0,.53)" strokeWidth="10" />
      <path d="M1852 920C2150 920 2270 870 2379 833S2500 796 2562 786" fill="none" stroke="rgba(0,0,0,.53)" strokeWidth="10" />
      <path d="M2019 687C2300 687 2400 697 2562 703" fill="none" stroke="url(#live)" strokeWidth="6" />
      <path d="M1626 1499h12v55h-12z" fill="url(#steel)" stroke="#000" strokeWidth="2" />
    </BoardArt>
    <NumberSlider id="dom-a" x={1687} y={388} w={351} nameW={110} name="Domain start" at={30} text="30.0" step={20} />
    <NumberSlider id="dom-b" x={1689} y={532} w={351} nameW={110} name="Domain start" at={30} text="30.0" step={20} />
    <NumberSlider id="x-count" x={1695} y={666} w={318} nameW={76} name="X Count" at={40} text="4" step={20} diamond green />
    <NumberSlider id="y-count" x={1699} y={742} w={318} nameW={76} name="Y Count" at={40} text="4" step={20} diamond />
    <NumberSlider id="radius" x={1681} y={1412} w={351} nameW={67} name="Radius" at={25} text="25.0" step={24} />
    <Component x={2125} y={448} w={144} h={90} left={58} ins={["A", "B"]} outs={["I"]} title="Dom" purple star />
    <Component x={2117} y={596} w={144} h={90} left={58} ins={["A", "B"]} outs={["I"]} title="Dom" purple star />
    <Component x={2363} y={482} w={112} h={170} left={26} ins={["P", "X", "Y", "R"]} outs={["R", "", "L"]} title="Rectangle" />
    <NodeBox $x={2463} $y={648} $w={110} $h={42} $gloss={9} $violet>
      <SliderName as="div" $w={93} $gloss={8}>Parameter</SliderName>
    </NodeBox>
    <Component x={2175} y={776} w={111} h={90} left={26} ins={["C", "P"]} outs={["B", "B"]} title="BBox" caption="Union Box" />
    <Component x={2383} y={794} w={112} h={130} left={26} ins={["B"]} outs={["F", "E", "V"]} title="DeBrep" />
    <NodeBox $x={1711} $y={900} $w={134} $h={42} $gloss={14}>
      <Grip /><NodeText>Notch geometry</NodeText><Grip $out />
    </NodeBox>
    <Note $x={2279} $y={1016} $w={201} $h={43}><Grip />{"{0,0.5,0}"}<Grip $out /></Note>
    <NodeBox $x={2541} $y={868} $w={112} $h={130} $gloss={14}>
      <Ports $w={60}>
        <Port><Grip /><StarBox><svg width="20" height="20"><path d="M0 20Q4 4 20 0v6Q8 8 6 20z" fill="#777" /></svg></StarBox></Port>
        <Port />
        <Port><Grip /></Port>
      </Ports>
    </NodeBox>
    <Component x={2313} y={1316} w={111} h={90} left={26} ins={["C", "P"]} outs={["B", "B"]} title="BBox" caption="Per Object" purple />
    <Component x={2129} y={1406} w={112} h={90} left={26} ins={["P", "R"]} outs={["C"]} title="Cir" purple />
    <Component x={2501} y={1441} w={112} h={130} left={26} ins={["S", "N", "C"]} outs={["S"]} title="Series" purple />
    <BoardArt width="936" height="1326" viewBox={`${OX} ${OY} 936 1326`} aria-hidden="true">
      <path d="M2464 1440l13 4-2 13-11-2z" />
      <circle cx="2500" cy="1495" r="42" fill="#0a0a0a" stroke="#0a0a0a" strokeWidth="3" />
      <circle cx="2500" cy="1495" r="43" fill="none" stroke="#0a0a0a" strokeWidth="6" strokeDasharray="16 7" />
      <circle cx="2500" cy="1495" r="38" fill="url(#dial)" stroke="#fff" strokeWidth="2" />
      <path d="M2474 1466l10-6 1 11zM2524 1478l7-10 3 12zM2465 1510l11-1-6 9zM2512 1517l12 7-11 7z" fill="#fff" />
    </BoardArt>
  </Board>
);

/* ---------- page ---------- */

const snapsOn = ["端点", "最近点", "点"];
const snaps = ["端点", "最近点", "点", "中点", "中心点", "交点", "垂点", "切点", "四分点", "节点", "顶点"];
const snapsOff = ["曲线上", "曲面上", "多重曲面上", "网格上"];

export default function App() {
  return (
    <>
      <GlobalStyle />
      <SharedDefs />
      <Desktop>
        <Modeler>
          <TopBar>
            <button type="button" aria-label="侧栏"><svg width="39" height="40"><path d="M1 1h37v38H1z" fill="#f9f9f9" stroke="#8ab6fb" strokeWidth="2" /><path d="M0 0h11v40H0z" fill="#8ab6fb" /></svg></button>
            <ModeList>
              {["锁定格点", "正交", "平面模式", "智慧轨迹", "操作轴", "建构历史"].map((t, i) => <ModeButton key={t} type="button" $on={i === 0}>{t}</ModeButton>)}
            </ModeList>
            <IconRow>
              <button type="button" aria-label="记录"><svg width="42" height="44" fill="none"><circle cx="20" cy="21" r="17.5" stroke="#a8a8a8" strokeWidth="2" /><path d="M16.5 18h6v6h-6zM23 21.5h19" stroke="#888" strokeWidth="2" /></svg></button>
              <button type="button" aria-label="目标"><svg width="44" height="44" fill="none" stroke="#8c8c8c" strokeWidth="2"><circle cx="23" cy="22" r="20.5" /><circle cx="23" cy="22" r="10" /></svg></button>
              <button type="button" aria-label="更多"><svg width="24" height="24" fill="none" stroke="#bdbdbd" strokeWidth="2"><path d="M1 3l9 9.5L1 22M13 3l9 9.5L13 22" /></svg></button>
            </IconRow>
          </TopBar>
          <Work>
            <Sidebar>
              <SidebarHead />
              <CommandInput type="text" placeholder="指令" aria-label="指令" />
              <Toolbox>
                {tools.map(([name, more, art]) => (
                  <ToolButton key={name} type="button" aria-label={name}>
                    <svg width="60" height="60" viewBox="0 0 60 60" aria-hidden="true">
                      {art}
                      {more === 1 && <path d="M44 43h9.5L48.7 52.5z" fill="#333" />}
                    </svg>
                  </ToolButton>
                ))}
              </Toolbox>
              <Snaps>
                <SnapGroup>
                  <SnapRow><Radio type="radio" name="snap-mode" defaultChecked />持续</SnapRow>
                  <SnapRow><Radio type="radio" name="snap-mode" />单次</SnapRow>
                </SnapGroup>
                <SnapGroup>
                  {snaps.map((t) => <SnapRow key={t}><Check type="checkbox" defaultChecked={snapsOn.includes(t)} />{t}</SnapRow>)}
                  {snapsOff.map((t) => <SnapRow key={t} $off><Check type="checkbox" disabled />{t}</SnapRow>)}
                  <SnapRow><Check type="checkbox" />投影</SnapRow>
                </SnapGroup>
              </Snaps>
            </Sidebar>
            <ViewArea>
              <ViewTabs>
                <button type="button" aria-label="四个视图"><svg width="40" height="38" fill="none" stroke="#bcbcbc" strokeWidth="2"><path d="M1 1h38v35H1zM20 1v35M1 18h38" /><path d="M2 3h7M21 3h8M2 20h7M21 20h8" strokeWidth="3" /></svg></button>
                <button type="button" aria-label="单一视图"><svg width="40" height="38" fill="none" stroke="#0f7dfb" strokeWidth="2"><path d="M1 1h38v35H1z" /><path d="M2 3h8" strokeWidth="3" /></svg></button>
                <ViewTabList>
                  <ViewTab type="button" $on>Top</ViewTab>
                  <ViewTab type="button">Right</ViewTab>
                  <ViewTab type="button">Front</ViewTab>
                  <ViewTab type="button">Right</ViewTab>
                  <ViewTab type="button" $bare>图纸配置…</ViewTab>
                </ViewTabList>
              </ViewTabs>
              <Canvas3D>
                <ViewScene />
                <ViewLabel>Top</ViewLabel>
              </Canvas3D>
            </ViewArea>
            <Panels>
              <LayerPanel id="upper" dim />
              <LayerPanel id="lower" />
            </Panels>
          </Work>
          <StatusBar>
            <button type="button" aria-label="历史"><svg width="28" height="22" stroke="#808080" strokeWidth="2"><path d="M0 2h28M0 8h28M0 14h28M0 20h28" /></svg></button>
            <StatusText $w={616} $pad={5}>Command: _Drag</StatusText>
            <StatusText $w={87}>Units</StatusText>
            <SelectWrap>
              <PlaneSelect aria-label="工作平面" defaultValue="cplane"><option value="cplane">工作平面</option></PlaneSelect>
              <svg width="26" height="24" fill="none" stroke="#a2a2a2" strokeWidth="2"><path d="M5 9l5-5 5 5M5 15l5 5 5-5" /></svg>
            </SelectWrap>
            <StatusText $w={191} $pad={28}>X: 379.386</StatusText>
            <StatusText $w={171}>Y: 39.054</StatusText>
            <StatusText>Z: 0.000</StatusText>
          </StatusBar>
        </Modeler>
        <Divider />
        <Editor>
          <EditorTabs>
            {["Params", "Maths", "Sets", "Vector", "Curve", "Surface", "Mesh", "Intersect", "Transform", "Dis"].map((t, i) => (
              <EditorTab key={t} type="button" $on={i === 0}>{t}</EditorTab>
            ))}
          </EditorTabs>
          <Ribbon>
            {ribbon.map(([name, items]) => (
              <RibbonGroup key={name}>
                <RibbonTools>
                  {items.map((it, i) => (it ? <RibbonTool key={i} type="button" aria-label={it[0]}>{it[1]}</RibbonTool> : <RibbonSep key={i} />))}
                </RibbonTools>
                <RibbonCaption>
                  <span>{name}</span>
                  <svg width="16" height="18" aria-hidden="true"><path d="M6.5 2h3v6H15l-7 8-7-8h5.500z" fill="#a8a8a8" /></svg>
                </RibbonCaption>
              </RibbonGroup>
            ))}
          </Ribbon>
          <FileBar>
            <FileGroup><FileTool name="Open" /><FileTool name="Save" /></FileGroup>
            <BarSep />
            <FileGroup>
              <SelectWrap>
                <ZoomSelect aria-label="Zoom" defaultValue="100"><option value="100">100%</option></ZoomSelect>
                <svg width="35" height="40" aria-hidden="true"><path d="M0 0h28q7 0 7 7v26q0 7-7 7H0z" fill="#2587fb" /><path d="M11 17l7 7 7-7" fill="none" stroke="#fff" strokeWidth="3" /></svg>
              </SelectWrap>
              <FileTool name="Extents" /><FileTool name="View" /><FileTool name="Sketch" />
            </FileGroup>
            <FileGroup><FileTool name="Wire" /><FileTool name="Shade" on /></FileGroup>
            <BarSep />
            <FileGroup><FileTool name="Selected" /><FileTool name="Palette" /></FileGroup>
            <BarSep />
            <FileGroup><FileTool name="Quality" /></FileGroup>
          </FileBar>
          <Graph />
        </Editor>
      </Desktop>
    </>
  );
}
